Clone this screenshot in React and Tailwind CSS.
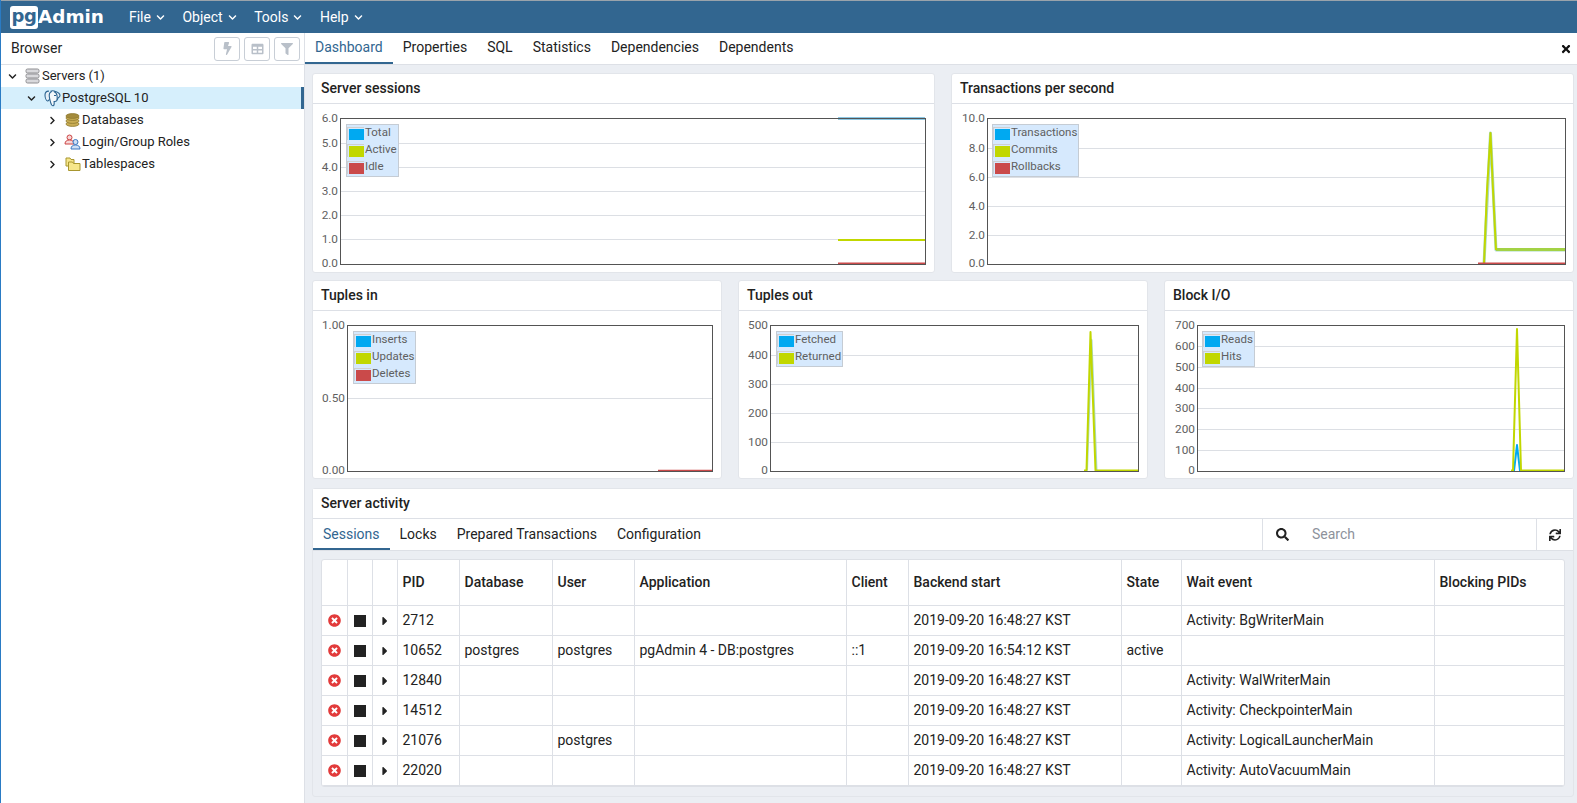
import React from "react";
import { FaBolt, FaTable, FaFilter, FaSearch, FaSync, FaTimes, FaTimesCircle, FaCaretRight, FaChevronDown, FaChevronRight } from "react-icons/fa";

const BLUE = "#00a9f1";
const GREEN = "#c1d700";
const RED = "#ca4a4a";
const PALE = "#a9d9c4";

function Swatch({ color }) {
  return (
    <span className="inline-block w-[17px] h-[13px] border-t border-l border-[#cfcfcf] shrink-0">
      <span className="block w-[15px] h-[11px] ml-[1px] mt-[1px]" style={{ background: color }} />
    </span>
  );
}

function Legend({ items, pos }) {
  return (
    <div className={`absolute ${pos} bg-[#d6e9fd] border border-[#c5ccd4] pr-[1px] text-[11.5px] leading-[17px] text-[#5f5f5f]`}>
      {items.map(([label, color]) => (
        <div key={label} className="flex items-center h-[17px]">
          <Swatch color={color} />
          <span className="ml-[1px] mb-[2px]">{label}</span>
        </div>
      ))}
    </div>
  );
}

function Chart({ ox, oy, plot, ticks, lines, height }) {
  const [l, t, r, b] = plot;
  return (
    <svg className="block w-full" height={height}>
      <g transform={`translate(${-ox} ${-oy})`}>
        {ticks.map(([label, y]) => (
          <g key={label}>
            {y > t && y < b && <line x1={l} x2={r} y1={y + 0.5} y2={y + 0.5} stroke="#dcdfe4" />}
            <text x={l - 2} y={Math.max(Math.min(y + 3.5, b + 2.5), t + 3.5)} textAnchor="end" fontSize="11.8" fill="#5f5f5f" fontFamily="Roboto, sans-serif">{label}</text>
          </g>
        ))}
        {lines.map((ln, i) => (
          <polyline key={i} points={ln.p} fill="none" stroke={ln.c} strokeWidth={ln.w || 2} strokeLinejoin="round" />
        ))}
        <rect x={l + 0.5} y={t + 0.5} width={r - l} height={b - t} fill="none" stroke="#545454" />
      </g>
    </svg>
  );
}

function Card({ title, children }) {
  return (
    <div className="bg-white rounded-[3px] border border-[#e2e5ea] flex flex-col">
      <div className="h-[30px] shrink-0 border-b border-[#dde0e6] pl-[8px] flex items-center font-medium text-[14px] text-[#222]">{title}</div>
      <div className="relative flex-1">{children}</div>
    </div>
  );
}

function ServersIcon() {
  return (
    <svg width="15" height="16" viewBox="0 0 15 16">
      {[1, 6, 11].map((y) => (
        <rect key={y} x="1" y={y} width="13" height="4" rx="1.5" fill="#d9d9dc" stroke="#8e8e92" />
      ))}
    </svg>
  );
}

function ElephantIcon() {
  return (
    <svg width="17" height="17" viewBox="0 0 17 17" fill="none" stroke="#2c6491" strokeWidth="1.100">
      <path d="M5 1.200C2.500.8 1 2.500 1 5c0 2.600 1.200 5.600 2.600 6 1.200.3 1.600-1.200 2.200-2.400" fill="#e6eff6" />
      <path d="M6.500 1.200C8 .7 9.500.7 11 1.200c3 .9 5 2.200 5 4.300 0 1.300-1 1.800-1.800 2.200-.3 1.200-.7 2-1.600 2.500" fill="#e6eff6" />
      <path d="M8 1.500C5.800 2 5 4 5.300 6.500c.2 2 .7 3.700 1.300 5.800.5 1.900 1.300 3.600 2.600 3.400 1.400-.2 1-2.400.9-4.200 1 .1 2.300-.2 2.800-1.200.4-1 .4-2.600.2-4.300C12.900 4 11.500 2 9.800 1.500" fill="#f4f8fb" />
      <path d="M10 5.500h2" />
    </svg>
  );
}

function DbIcon() {
  return (
    <svg width="15" height="14" viewBox="0 0 15 14">
      {[9, 6, 3].map((y) => (
        <ellipse key={y} cx="7.500" cy={y + 2} rx="6.500" ry="2.400" fill="#c9ad55" stroke="#8f7a30" strokeWidth="0.8" />
      ))}
      <ellipse cx="7.500" cy="3" rx="6.500" ry="2.400" fill="#a48b3c" stroke="#8f7a30" strokeWidth="0.8" />
    </svg>
  );
}

function RolesIcon() {
  return (
    <svg width="17" height="16" viewBox="0 0 17 16">
      <circle cx="5.500" cy="3.500" r="2.500" fill="#f7d7d7" stroke="#c44" />
      <path d="M1 10c0-3 2-4 4.500-4S10 7 10 10z" fill="#f7d7d7" stroke="#c44" />
      <circle cx="11.500" cy="8" r="2.500" fill="#cfe0f5" stroke="#3a78c0" />
      <path d="M7 15c0-3 2-4 4.500-4s4.500 1 4.500 4z" fill="#cfe0f5" stroke="#3a78c0" />
    </svg>
  );
}

function FolderIcon() {
  return (
    <svg width="16" height="15" viewBox="0 0 16 15">
      <path d="M1 1h4l1 1.500h3V9H1z" fill="#f6e68a" stroke="#a8962f" />
      <path d="M3.500 5h4l1 1.500h6.500v7H3.500z" fill="#f6e68a" stroke="#a8962f" />
    </svg>
  );
}

function TreeRow({ depth, open, icon, label, selected, iconBox = "w-[17px]" }) {
  return (
    <div className={`relative h-[22px] flex items-center ${selected ? "bg-[#d6effc]" : ""} ${depth}`}>
      {open ? <FaChevronDown className="w-[9px] h-[9px] text-[#222] mr-[7px]" /> : <FaChevronRight className="w-[9px] h-[9px] text-[#222] mr-[7px]" />}
      <span className={`${iconBox} flex justify-center mr-[1px]`}>{icon}</span>
      <span className="text-[13px] text-[#222] whitespace-nowrap">{label}</span>
      {selected && <span className="absolute right-0 top-0 bottom-0 w-[3px] bg-[#326690]" />}
    </div>
  );
}

function Tabs({ items, tabClass = "" }) {
  return (
    <div className="flex text-[14px]">
      {items.map((t, i) => (
        <div key={t} className={`px-[10px] flex items-center h-full border-b-[2px] whitespace-nowrap ${tabClass} ${i === 0 ? "border-[#326690] text-[#326690]" : "border-transparent text-[#222]"}`}>{t}</div>
      ))}
    </div>
  );
}

const rows = [
  ["2712", "", "", "", "", "2019-09-20 16:48:27 KST", "", "Activity: BgWriterMain", ""],
  ["10652", "postgres", "postgres", "pgAdmin 4 - DB:postgres", "::1", "2019-09-20 16:54:12 KST", "active", "", ""],
  ["12840", "", "", "", "", "2019-09-20 16:48:27 KST", "", "Activity: WalWriterMain", ""],
  ["14512", "", "", "", "", "2019-09-20 16:48:27 KST", "", "Activity: CheckpointerMain", ""],
  ["21076", "", "postgres", "", "", "2019-09-20 16:48:27 KST", "", "Activity: LogicalLauncherMain", ""],
  ["22020", "", "", "", "", "2019-09-20 16:48:27 KST", "", "Activity: AutoVacuumMain", ""],
];

const headers = ["PID", "Database", "User", "Application", "Client", "Backend start", "State", "Wait event", "Blocking PIDs"];
const widths = ["w-[25px]", "w-[25px]", "w-[25px]", "w-[62px]", "w-[93px]", "w-[82px]", "w-[212px]", "w-[62px]", "w-[213px]", "w-[60px]", "w-[253px]", "w-[131px]"];

function Nav({ label }) {
  return (
    <div className="flex items-center text-white text-[14px]">
      <span>{label}</span>
      <FaChevronDown className="w-[9px] h-[9px] ml-[5px]" />
    </div>
  );
}

function ToolBtn({ children }) {
  return (
    <div className="w-[26px] h-[24px] border border-[#c8ced6] rounded-[3px] flex items-center justify-center text-[#b9c0c9]">{children}</div>
  );
}

export default function App() {
  return (
    <div className="w-full h-[803px] overflow-hidden flex flex-col border-l border-[#2a7bc4] font-[family-name:Roboto,sans-serif] bg-white">
      <div className="h-[33px] shrink-0 bg-[#326690] border-t border-[#9aa3ab] flex items-center">
        <div className="flex items-center ml-[9px] font-[family-name:'DejaVu_Sans',sans-serif] font-bold">
          <span className="w-[28px] h-[23px] bg-white rounded-[3px] text-[#326690] text-[18px] leading-[19px] flex justify-center tracking-[-0.5px]">pg</span>
          <span className="text-white text-[18.4px] leading-none">Admin</span>
        </div>
        <div className="flex gap-[17.5px] ml-[25px]">
          <Nav label="File" />
          <Nav label="Object" />
          <Nav label="Tools" />
          <Nav label="Help" />
        </div>
      </div>

      <div className="flex-1 flex min-h-0">
        <div className="w-[303px] shrink-0 flex flex-col">
          <div className="h-[32px] shrink-0 border-b border-[#dde0e6] flex items-center pl-[10px] pr-[4px]">
            <span className="text-[14px] text-[#222] flex-1">Browser</span>
            <div className="flex gap-[4px]">
              <ToolBtn><FaBolt className="w-[11px] h-[13px]" /></ToolBtn>
              <ToolBtn><FaTable className="w-[13px] h-[12px]" /></ToolBtn>
              <ToolBtn><FaFilter className="w-[12px] h-[12px]" /></ToolBtn>
            </div>
          </div>
          <TreeRow depth="pl-[7px]" open icon={<ServersIcon />} label="Servers (1)" />
          <TreeRow depth="pl-[26px]" open selected iconBox="w-[18px]" icon={<ElephantIcon />} label="PostgreSQL 10" />
          <TreeRow depth="pl-[47px]" icon={<DbIcon />} label="Databases" />
          <TreeRow depth="pl-[47px]" icon={<RolesIcon />} label="Login/Group Roles" />
          <TreeRow depth="pl-[47px]" icon={<FolderIcon />} label="Tablespaces" />
        </div>

        <div className="w-px bg-[#dde0e6] shrink-0" />

        <div className="flex-1 min-w-0 flex flex-col bg-[#ebeef3]">
          <div className="h-[32px] shrink-0 bg-white border-b border-[#dde0e6] flex justify-between items-stretch">
            <Tabs items={["Dashboard", "Properties", "SQL", "Statistics", "Dependencies", "Dependents"]} />
            <div className="flex items-center pr-[6px]"><FaTimes className="w-[10px] h-[12px] text-[#111]" /></div>
          </div>

          <div className="pl-[7px] pr-[3px] pt-[8px] flex flex-col">
            <div className="grid grid-cols-2 gap-x-[16px] h-[199px]">
              <Card title="Server sessions">
                <Chart ox={313} oy={104} height={168} plot={[340, 118, 925, 264]}
                  ticks={[["6.0", 118], ["5.0", 143], ["4.0", 167], ["3.0", 191], ["2.0", 215], ["1.0", 239], ["0.0", 264]]}
                  lines={[
                    { p: "838,118.5 925,118.5", c: "#1a8fc8" },
                    { p: "838,240 925,240", c: GREEN },
                    { p: "838,263.5 925,263.5", c: RED },
                  ]} />
                <Legend pos="left-[33px] top-[20px]" items={[["Total", BLUE], ["Active", GREEN], ["Idle", RED]]} />
              </Card>
              <Card title="Transactions per second">
                <Chart ox={952} oy={104} height={168} plot={[987, 118, 1565, 264]}
                  ticks={[["10.0", 118], ["8.0", 148], ["6.0", 177], ["4.0", 206], ["2.0", 235], ["0.0", 264]]}
                  lines={[
                    { p: "1484,264 1490.500,133 1496,250 1565,250", c: PALE, w: 3 },
                    { p: "1496,249.500 1565,249.500", c: "#a3d245", w: 3 },
                    { p: "1484,264 1487,190 1490.500,133 1493,190 1496,250", c: GREEN },
                    { p: "1478,263.500 1565,263.500", c: RED },
                  ]} />
                <Legend pos="left-[40px] top-[20px]" items={[["Transactions", BLUE], ["Commits", GREEN], ["Rollbacks", RED]]} />
              </Card>
            </div>

            <div className="grid grid-cols-3 gap-x-[16px] h-[199px] mt-[8px]">
              <Card title="Tuples in">
                <Chart ox={313} oy={311} height={167} plot={[347, 325, 712, 471]}
                  ticks={[["1.00", 325], ["0.50", 398], ["0.00", 471]]}
                  lines={[{ p: "658,470.500 712,470.500", c: RED, w: 1.5 }]} />
                <Legend pos="left-[40px] top-[20px]" items={[["Inserts", BLUE], ["Updates", GREEN], ["Deletes", RED]]} />
              </Card>
              <Card title="Tuples out">
                <Chart ox={739} oy={311} height={167} plot={[770, 325, 1138, 471]}
                  ticks={[["500", 325], ["400", 355], ["300", 384], ["200", 413], ["100", 442], ["0", 471]]}
                  lines={[
                    { p: "1087,470.500 1091.500,340 1096.500,470.500", c: PALE, w: 2 },
                    { p: "1084,470.500 1086.500,470.500 1090.500,332 1095.500,470.500 1138,470.500", c: GREEN },
                  ]} />
                <Legend pos="left-[37px] top-[20px]" items={[["Fetched", BLUE], ["Returned", GREEN]]} />
              </Card>
              <Card title="Block I/O">
                <Chart ox={1165} oy={311} height={167} plot={[1197, 325, 1564, 471]}
                  ticks={[["700", 325], ["600", 346], ["500", 367], ["400", 388], ["300", 408], ["200", 429], ["100", 450], ["0", 471]]}
                  lines={[
                    { p: "1514,471 1517,445 1520,471", c: BLUE },
                    { p: "1511,470.500 1513,470.500 1517,329 1521,470.500 1564,470.500", c: GREEN },
                  ]} />
                <Legend pos="left-[37px] top-[20px]" items={[["Reads", BLUE], ["Hits", GREEN]]} />
              </Card>
            </div>

            <div className="mt-[9px] h-[309px] border border-[#e2e5ea] rounded-[3px] flex flex-col">
              <div className="h-[30px] shrink-0 bg-white border-b border-[#dde0e6] pl-[8px] flex items-center font-medium text-[14px] text-[#222]">Server activity</div>
              <div className="h-[32px] shrink-0 bg-white border-b border-[#dde0e6] flex items-stretch justify-between">
                <Tabs tabClass="pt-[2px]" items={["Sessions", "Locks", "Prepared Transactions", "Configuration"]} />
                <div className="flex">
                  <div className="w-[274px] border-l border-[#dde0e6] flex items-center pl-[13px]">
                    <FaSearch className="w-[13px] h-[13px] text-[#222]" />
                    <span className="ml-[23px] text-[14px] text-[#8d929b]">Search</span>
                  </div>
                  <div className="w-[37px] border-l border-[#dde0e6] flex items-center justify-center">
                    <FaSync className="w-[12px] h-[12px] text-[#222]" />
                  </div>
                </div>
              </div>
              <div className="px-[8px] pt-[8px]">
                <div className="bg-white rounded-[3px] overflow-hidden border border-[#dde0e6]">
                  <table className="w-full table-fixed border-collapse text-[14px] text-[#222]">
                    <colgroup>
                      {widths.map((w, i) => <col key={i} className={w} />)}
                    </colgroup>
                    <thead>
                      <tr className="h-[45px]">
                        <th className="border-r border-b border-[#dde0e6]" />
                        <th className="border-r border-b border-[#dde0e6]" />
                        <th className="border-r border-b border-[#dde0e6]" />
                        {headers.map((h) => (
                          <th key={h} className="border-r last:border-r-0 border-b border-[#dde0e6] text-left font-medium px-[5px] whitespace-nowrap">{h}</th>
                        ))}
                      </tr>
                    </thead>
                    <tbody>
                      {rows.map((r) => (
                        <tr key={r[0]} className="h-[30px]">
                          <td className="border-r border-b border-[#dde0e6] text-center"><FaTimesCircle className="inline-block w-[13px] h-[13px] text-[#e23b3b]" /></td>
                          <td className="border-r border-b border-[#dde0e6] text-center"><span className="inline-block align-middle w-[12px] h-[12px] bg-[#222]" /></td>
                          <td className="border-r border-b border-[#dde0e6] text-center"><FaCaretRight className="inline-block w-[10px] h-[14px] text-[#222]" /></td>
                          {r.map((c, i) => (
                            <td key={i} className="border-r last:border-r-0 border-b border-[#dde0e6] px-[5px] whitespace-nowrap">{c}</td>
                          ))}
                        </tr>
                      ))}
                    </tbody>
                  </table>
                </div>
              </div>
            </div>
          </div>
        </div>
      </div>
    </div>
  );
}
